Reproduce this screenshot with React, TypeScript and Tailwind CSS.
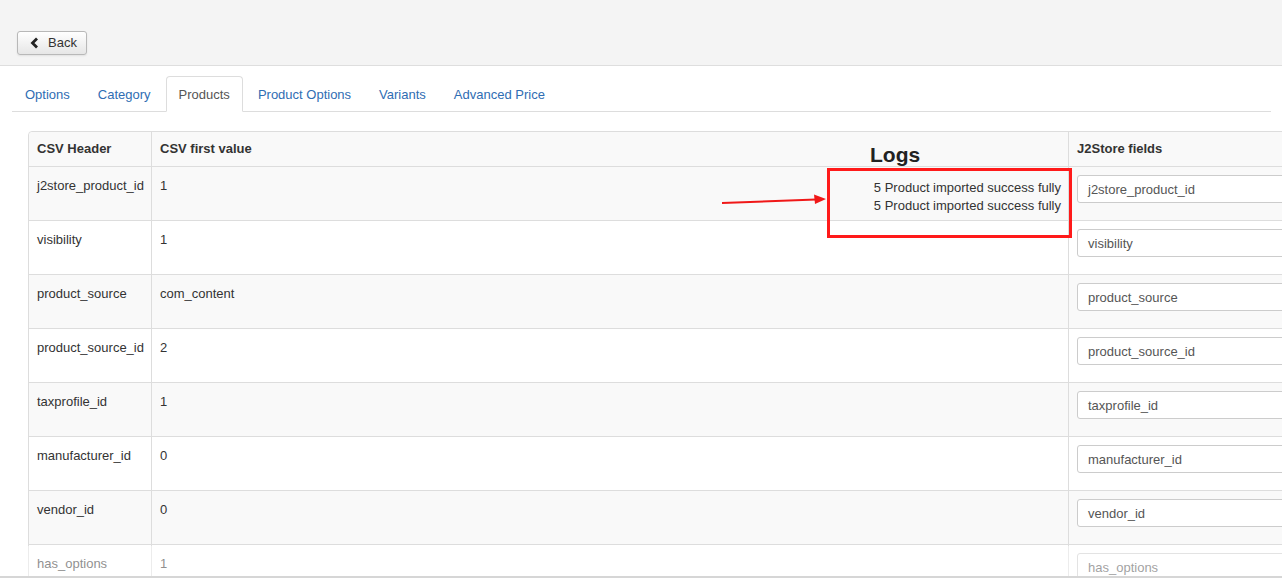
const tabs = ["Options", "Category", "Products", "Product Options", "Variants", "Advanced Price"]

const rows = [
  { header: "j2store_product_id", value: "1" },
  { header: "visibility", value: "1" },
  { header: "product_source", value: "com_content" },
  { header: "product_source_id", value: "2" },
  { header: "taxprofile_id", value: "1" },
  { header: "manufacturer_id", value: "0" },
  { header: "vendor_id", value: "0" },
  { header: "has_options", value: "1" },
]

export default function App() {
  return (
    <div
      className="relative h-[578px] overflow-hidden bg-white text-[13px] leading-[18px] text-[#333]"
      style={{ fontFamily: '"Liberation Sans", Arial, Helvetica, sans-serif' }}
    >
      {/* toolbar */}
      <div className="h-[66px] border-b border-[#dedede] bg-[#f4f4f4] pl-[17px] pt-[31px]">
        <button className="flex h-[24px] items-center gap-[9px] rounded-[3px] border border-[#b8b8b8] bg-gradient-to-b from-white to-[#e6e6e6] pl-[12px] pr-[9px] text-[13px] text-[#333] shadow-[0_1px_2px_rgba(0,0,0,0.08)]">
          <svg width="9" height="12" viewBox="0 0 9 12">
            <polyline points="7,1.5 2.5,6 7,10.5" fill="none" stroke="#222" strokeWidth="2.8" />
          </svg>
          <span>Back</span>
        </button>
      </div>

      <div className="px-[12px] pt-[10px]">
        {/* tabs */}
        <ul className="mr-[-1px] flex w-[1259px] border-b border-[#ddd]">
          {tabs.map((t) => (
            <li key={t} className="mr-[2px] mb-[-1px]">
              {t === "Products" ? (
                <span className="block rounded-t-[4px] border border-[#ddd] border-b-white bg-white px-[12px] pt-[9px] pb-[7px] text-[#555]">
                  {t}
                </span>
              ) : (
                <span className="block border border-transparent px-[12px] pt-[9px] pb-[7px] text-[#2f6db3]">{t}</span>
              )}
            </li>
          ))}
        </ul>

        {/* mapping table */}
        <div className="pl-[16px] pt-[19px]">
          <table className="w-[1290px] table-fixed border-separate border-spacing-0 rounded-tl-[4px] border border-[#ddd]">
            <colgroup>
              <col className="w-[122px]" />
              <col className="w-[917px]" />
              <col className="w-[251px]" />
            </colgroup>
            <thead>
              <tr className="bg-[#f9f9f9]">
                <th className="rounded-tl-[4px] px-[8px] py-[8px] text-left font-bold">CSV Header</th>
                <th className="border-l border-[#ddd] px-[8px] py-[8px] text-left font-bold">CSV first value</th>
                <th className="border-l border-[#ddd] px-[8px] py-[8px] text-left font-bold">J2Store fields</th>
              </tr>
            </thead>
            <tbody>
              {rows.map((r, i) => (
                <tr key={r.header} className={i % 2 === 0 ? "bg-[#f9f9f9]" : "bg-white"}>
                  <td className="border-t border-[#ddd] px-[8px] pt-[10px] align-top whitespace-nowrap">{r.header}</td>
                  <td className="border-t border-l border-[#ddd] px-[8px] pt-[10px] align-top">{r.value}</td>
                  <td className="border-t border-l border-[#ddd] px-[8px] pt-[8px] pb-[17px] align-top">
                    <div className="flex h-[28px] w-[230px] items-center rounded-[3px] border border-[#ccc] bg-white px-[10px] pt-[1px] text-[#555]">
                      {r.header}
                    </div>
                  </td>
                </tr>
              ))}
            </tbody>
          </table>
        </div>
      </div>

      {/* logs annotation */}
      <div className="absolute left-[870px] top-[142px] text-[21px] leading-[26px] font-bold text-[#222]">Logs</div>
      <div className="absolute left-[827px] top-[168px] h-[70px] w-[245px] border-[3px] border-[#ff1a1a] pr-[8px] pt-[8px] text-right">
        <div>5 Product imported success fully</div>
        <div>5 Product imported success fully</div>
      </div>
      <svg className="absolute left-[720px] top-[192px]" width="108" height="16" viewBox="0 0 108 16">
        <line x1="2" y1="11" x2="96" y2="7.5" stroke="#f01818" strokeWidth="2" />
        <polygon points="106,7 94,2.5 95,12" fill="#f01818" />
      </svg>

      {/* faded bottom strip */}
      <div className="absolute bottom-0 left-0 right-0 h-[32px] border-b-2 border-[#d6d6d6] bg-white/45" />
    </div>
  )
}
